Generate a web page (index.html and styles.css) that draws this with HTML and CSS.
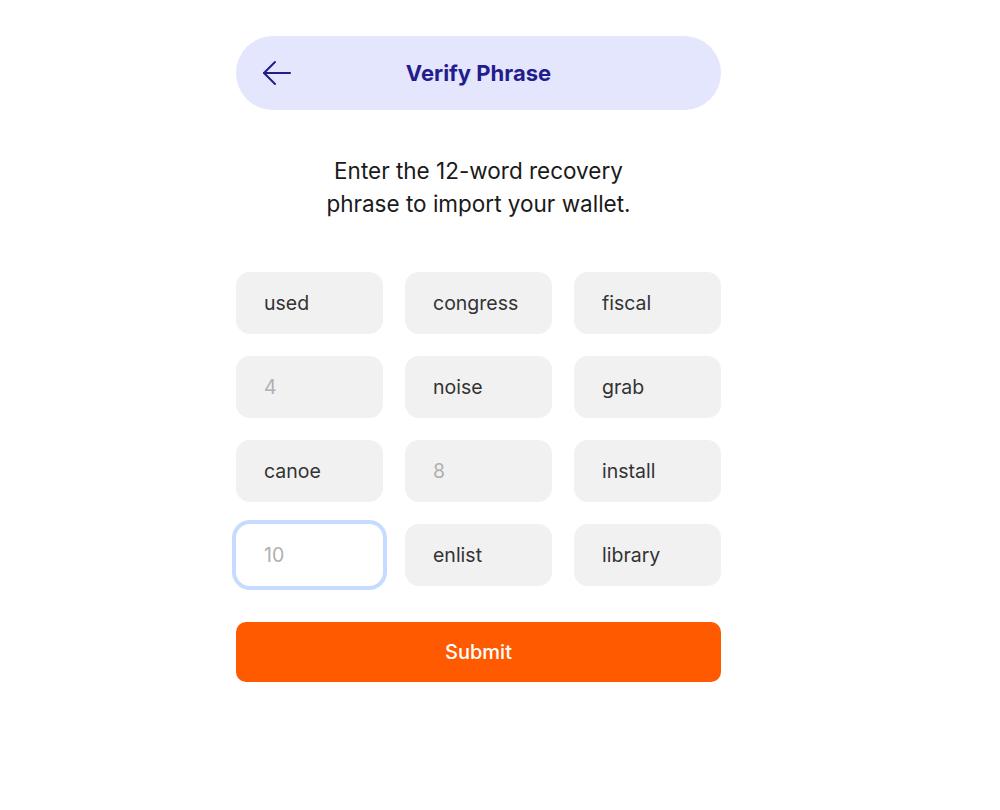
FILE: index.html
```html
<!DOCTYPE html>
<html>
<head>
<meta charset="utf-8">
<link rel="stylesheet" href="styles.css">
</head>
<body>
<main class="page">
  <header class="topbar">
    <button class="back" aria-label="Back">
      <svg width="30" height="26" viewBox="0 0 30 26" fill="none" stroke="#231c8c" stroke-width="2" stroke-linecap="round" stroke-linejoin="round">
        <path d="M28 13H2"/>
        <path d="M13 2L2 13L13 24"/>
      </svg>
    </button>
    <h1 class="title">Verify Phrase</h1>
  </header>
  <p class="intro">Enter the 12-word recovery<br>phrase to import your wallet.</p>
  <div class="grid">
    <input class="word" value="used">
    <input class="word" value="congress">
    <input class="word" value="fiscal">
    <input class="word" placeholder="4">
    <input class="word" value="noise">
    <input class="word" value="grab">
    <input class="word" value="canoe">
    <input class="word" placeholder="8">
    <input class="word" value="install">
    <input class="word focused" placeholder="10">
    <input class="word" value="enlist">
    <input class="word" value="library">
  </div>
  <button class="submit">Submit</button>
</main>
</body>
</html>
```
FILE: styles.css
```css
html, body {
  margin: 0;
  padding: 0;
  background: #ffffff;
}
body {
  font-family: Inter, "Noto Sans", sans-serif;
  color: #1a1a1a;
}
.page {
  width: 485px;
  margin-left: 236px;
  padding-top: 36px;
  display: flex;
  flex-direction: column;
}
.topbar {
  height: 74px;
  border-radius: 37px;
  background: #e3e6fc;
  display: flex;
  align-items: center;
  position: relative;
}
.back {
  border: 0;
  background: none;
  padding: 0;
  margin-left: 26px;
  display: flex;
  cursor: pointer;
}
.title {
  position: absolute;
  left: 0;
  right: 0;
  top: 0;
  bottom: 0;
  margin: 0;
  display: flex;
  align-items: center;
  justify-content: center;
  font-size: 22px;
  font-weight: 700;
  color: #231c8c;
  pointer-events: none;
}
.intro {
  margin: 44px 0 0;
  text-align: center;
  font-size: 22.5px;
  line-height: 33px;
  color: #1a1a1a;
}
.grid {
  margin-top: 52px;
  display: grid;
  grid-template-columns: repeat(3, 1fr);
  gap: 22px 22px;
}
.word {
  box-sizing: border-box;
  width: 100%;
  height: 62px;
  border: 0;
  border-radius: 14px;
  background: #f1f1f1;
  padding: 0 0 0 28px;
  font-family: Inter, "Noto Sans", sans-serif;
  font-size: 19.5px;
  color: #333333;
  outline: none;
}
.word::placeholder {
  color: #b0b0b0;
}
.word.focused {
  background: #ffffff;
  box-shadow: 0 0 0 4px #c5dcff;
}
.submit {
  margin-top: 36px;
  height: 60px;
  border: 0;
  border-radius: 10px;
  background: #ff5a00;
  color: #ffffff;
  font-family: Inter, "Noto Sans", sans-serif;
  font-size: 20px;
  font-weight: 500;
  cursor: pointer;
}
```
